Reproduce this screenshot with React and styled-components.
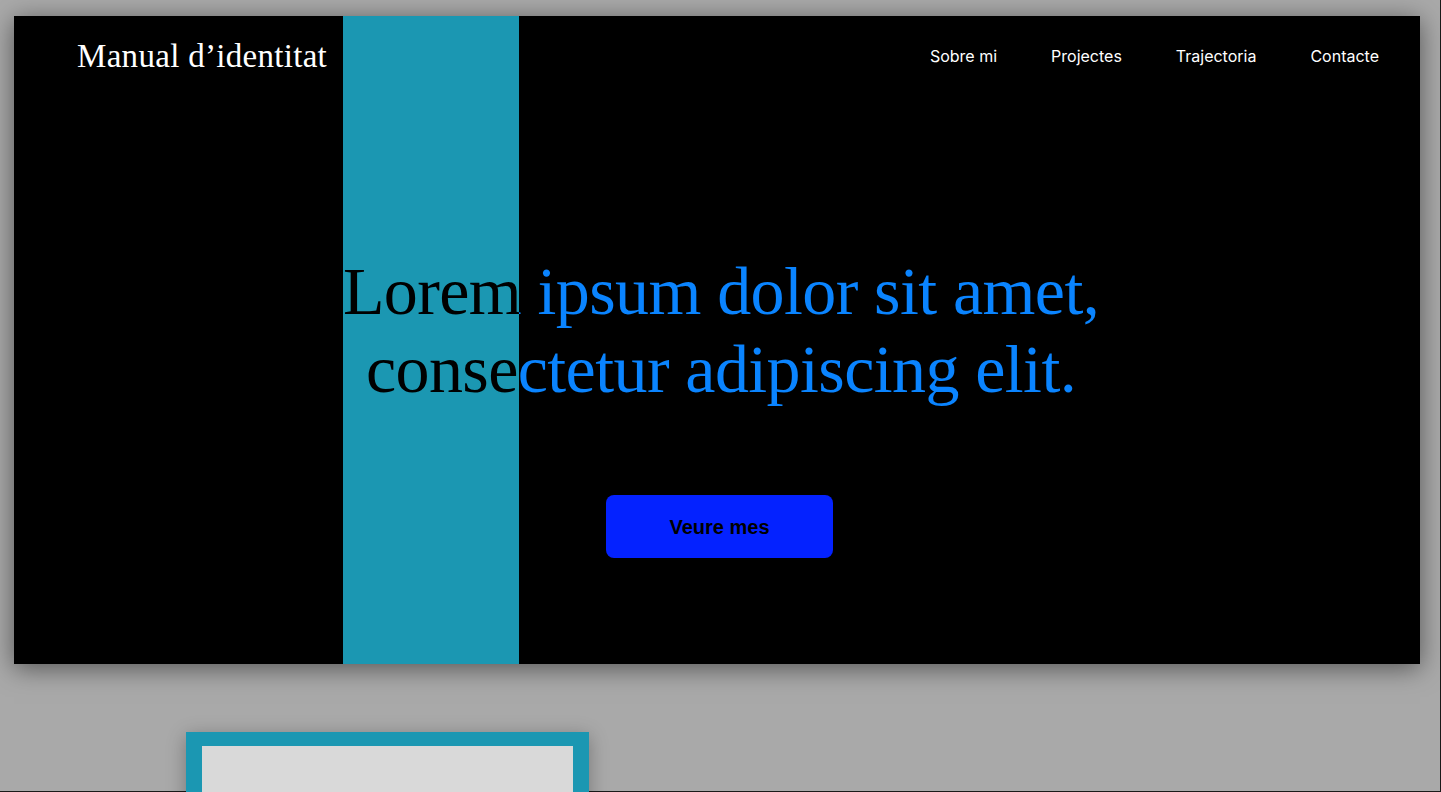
import React from 'react';
import styled, { createGlobalStyle } from 'styled-components';

const GlobalStyle = createGlobalStyle`
  html, body {
    margin: 0;
    padding: 0;
    background: #a9a9a9;
  }
  * {
    box-sizing: border-box;
  }
`;

const StyledPage = styled.div`
  height: 792px;
  padding: 16px 20px 0 14px;
  border-right: 1px solid #1a1a1a;
  border-bottom: 1px solid #1a1a1a;
`;

const StyledHero = styled.section`
  height: 648px;
  display: flex;
  flex-direction: column;
  align-items: center;
  background: linear-gradient(90deg, #000 329px, #1b97b2 329px 505px, #000 505px);
  box-shadow: 0 4px 24px rgba(0, 0, 0, 0.5);
`;

const StyledHeader = styled.header`
  align-self: stretch;
  height: 80px;
  display: flex;
  align-items: center;
  justify-content: space-between;
  padding: 0 41px 0 63px;
`;

const StyledLogo = styled.div`
  font-family: 'Liberation Serif', serif;
  font-size: 33px;
  color: #fff;
  letter-spacing: 0.3px;
`;

const StyledNav = styled.nav`
  display: flex;
  gap: 54px;
  a {
    font-family: Inter, 'Noto Sans', sans-serif;
    font-size: 16px;
    color: #fff;
    text-decoration: none;
  }
`;

const StyledHeadline = styled.h1`
  align-self: stretch;
  margin: 156px 0 0;
  padding-left: 8px;
  font-family: 'Liberation Serif', serif;
  font-weight: 400;
  font-size: 68px;
  line-height: 78px;
  letter-spacing: -0.6px;
  text-align: center;
  background: linear-gradient(90deg, #000 505px, #0a84ff 505px);
  -webkit-background-clip: text;
  background-clip: text;
  color: transparent;
`;

const StyledButton = styled.button`
  margin: 87px 0 0 5px;
  padding-top: 2px;
  width: 227px;
  height: 63px;
  border: none;
  border-radius: 8px;
  background: #0422ff;
  color: #000;
  font-family: 'Liberation Sans', Arial, sans-serif;
  font-weight: 700;
  font-size: 20px;
  cursor: pointer;
`;

const StyledCard = styled.div`
  width: 403px;
  height: 200px;
  margin: 68px 0 0 172px;
  border: 16px solid #1b97b2;
  border-top-width: 14px;
  background: #d9d9d9;
  box-shadow: 0 4px 18px rgba(0, 0, 0, 0.3);
`;

export default function App() {
  const links = ['Sobre mi', 'Projectes', 'Trajectoria', 'Contacte'];

  return (
    <>
      <GlobalStyle />
      <StyledPage>
        <StyledHero>
          <StyledHeader>
            <StyledLogo>Manual d’identitat</StyledLogo>
            <StyledNav>
              {links.map((item) => (
                <a key={item} href="#">{item}</a>
              ))}
            </StyledNav>
          </StyledHeader>
          <StyledHeadline>
            Lorem ipsum dolor sit amet,
            <br />
            consectetur adipiscing elit.
          </StyledHeadline>
          <StyledButton>Veure mes</StyledButton>
        </StyledHero>
        <StyledCard />
      </StyledPage>
    </>
  );
}
